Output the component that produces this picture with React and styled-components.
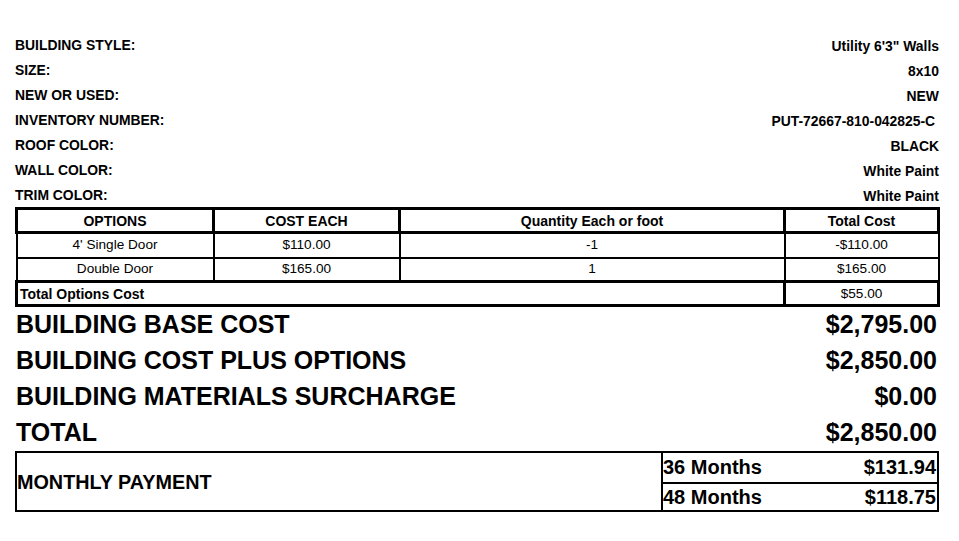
import React from "react";
import styled, { createGlobalStyle } from "styled-components";

const GlobalStyle = createGlobalStyle`
  html, body {
    margin: 0;
    padding: 0;
    background: #ffffff;
    color: #000000;
    font-family: "Liberation Sans", Arial, Helvetica, sans-serif;
  }
  * { box-sizing: border-box; }
`;

const Page = styled.div`
  width: 959px;
  padding: 33px 20px 0 15px;
`;

const InfoList = styled.div`
  display: grid;
  grid-auto-rows: 25px;
`;

const InfoRow = styled.div`
  display: flex;
  justify-content: space-between;
  align-items: center;
  font-size: 13.9px;
  font-weight: 700;
  line-height: 1;
`;

const InfoValue = styled.span`
  padding-top: 2px;
  white-space: pre;
`;

const OptionsTable = styled.table`
  width: 922px;
  margin-top: -1px;
  border-collapse: collapse;
  table-layout: fixed;
`;

const Th = styled.th`
  border: 3px solid #000;
  height: 24px;
  padding: 0 2px;
  font-weight: 700;
  font-size: 14px;
  text-align: center;
  vertical-align: middle;
  line-height: 1;
`;

const Td = styled.td`
  border: ${(p) => (p.$thick ? "3px" : "2px")} solid #000;
  height: ${(p) => p.$h || 24}px;
  padding: 0 2px;
  font-weight: ${(p) => (p.$bold ? 700 : 400)};
  font-size: ${(p) => (p.$bold ? "14px" : "13.6px")};
  text-align: ${(p) => p.$align || "center"};
  vertical-align: middle;
  line-height: 1;
`;

const SummaryList = styled.div`
  display: grid;
  grid-auto-rows: 36px;
  margin-top: -1px;
`;

const SummaryRow = styled.div`
  display: flex;
  justify-content: space-between;
  align-items: center;
  padding: 0 2px 0 1px;
  font-size: 25px;
  font-weight: 700;
  line-height: 1;
`;

const PaymentBox = styled.div`
  display: flex;
  height: 61px;
  margin-top: 1px;
  border: 2px solid #000;
`;

const PaymentLabel = styled.div`
  flex: 1;
  display: flex;
  align-items: center;
  padding-top: 1px;
  font-size: 19.8px;
  font-weight: 700;
`;

const TermList = styled.div`
  width: 276px;
  border-left: 2px solid #000;
  display: grid;
  grid-template-rows: 1fr 1fr;
`;

const TermRow = styled.div`
  display: flex;
  justify-content: space-between;
  align-items: center;
  padding: 0 1px 0 0;
  border-top: ${(p) => (p.$first ? "none" : "2px solid #000")};
  font-size: 20px;
  font-weight: 700;
  line-height: 1;
`;

const info = [
  ["BUILDING STYLE:", `Utility 6'3" Walls`],
  ["SIZE:", "8x10"],
  ["NEW OR USED:", "NEW"],
  ["INVENTORY NUMBER:", "PUT-72667-810-042825-C "],
  ["ROOF COLOR:", "BLACK"],
  ["WALL COLOR:", "White Paint"],
  ["TRIM COLOR:", "White Paint"],
];

const options = [
  ["4' Single Door", "$110.00", "-1", "-$110.00"],
  ["Double Door", "$165.00", "1", "$165.00"],
];

const summary = [
  ["BUILDING BASE COST", "$2,795.00"],
  ["BUILDING COST PLUS OPTIONS", "$2,850.00"],
  ["BUILDING MATERIALS SURCHARGE", "$0.00"],
  ["TOTAL", "$2,850.00"],
];

const terms = [
  ["36 Months", "$131.94"],
  ["48 Months", "$118.75"],
];

export default function App() {
  return (
    <>
      <GlobalStyle />
      <Page>
        <InfoList>
          {info.map(([label, value]) => (
            <InfoRow key={label}>
              <span>{label}</span>
              <InfoValue>{value}</InfoValue>
            </InfoRow>
          ))}
        </InfoList>

        <OptionsTable>
          <colgroup>
            <col style={{ width: 197 }} />
            <col style={{ width: 186 }} />
            <col style={{ width: 385 }} />
            <col style={{ width: 154 }} />
          </colgroup>
          <thead>
            <tr>
              <Th>OPTIONS</Th>
              <Th>COST EACH</Th>
              <Th>Quantity Each or foot</Th>
              <Th>Total Cost</Th>
            </tr>
          </thead>
          <tbody>
            {options.map((row, i) => (
              <tr key={row[0]}>
                {row.map((cell, j) => (
                  <Td key={j} $h={i === 0 ? 25 : 24}>
                    {cell}
                  </Td>
                ))}
              </tr>
            ))}
            <tr>
              <Td colSpan={3} $thick $bold $align="left">
                Total Options Cost
              </Td>
              <Td $thick>$55.00</Td>
            </tr>
          </tbody>
        </OptionsTable>

        <SummaryList>
          {summary.map(([label, value]) => (
            <SummaryRow key={label}>
              <span>{label}</span>
              <span>{value}</span>
            </SummaryRow>
          ))}
        </SummaryList>

        <PaymentBox>
          <PaymentLabel>MONTHLY PAYMENT</PaymentLabel>
          <TermList>
            {terms.map(([label, value], i) => (
              <TermRow key={label} $first={i === 0}>
                <span>{label}</span>
                <span>{value}</span>
              </TermRow>
            ))}
          </TermList>
        </PaymentBox>
      </Page>
    </>
  );
}
